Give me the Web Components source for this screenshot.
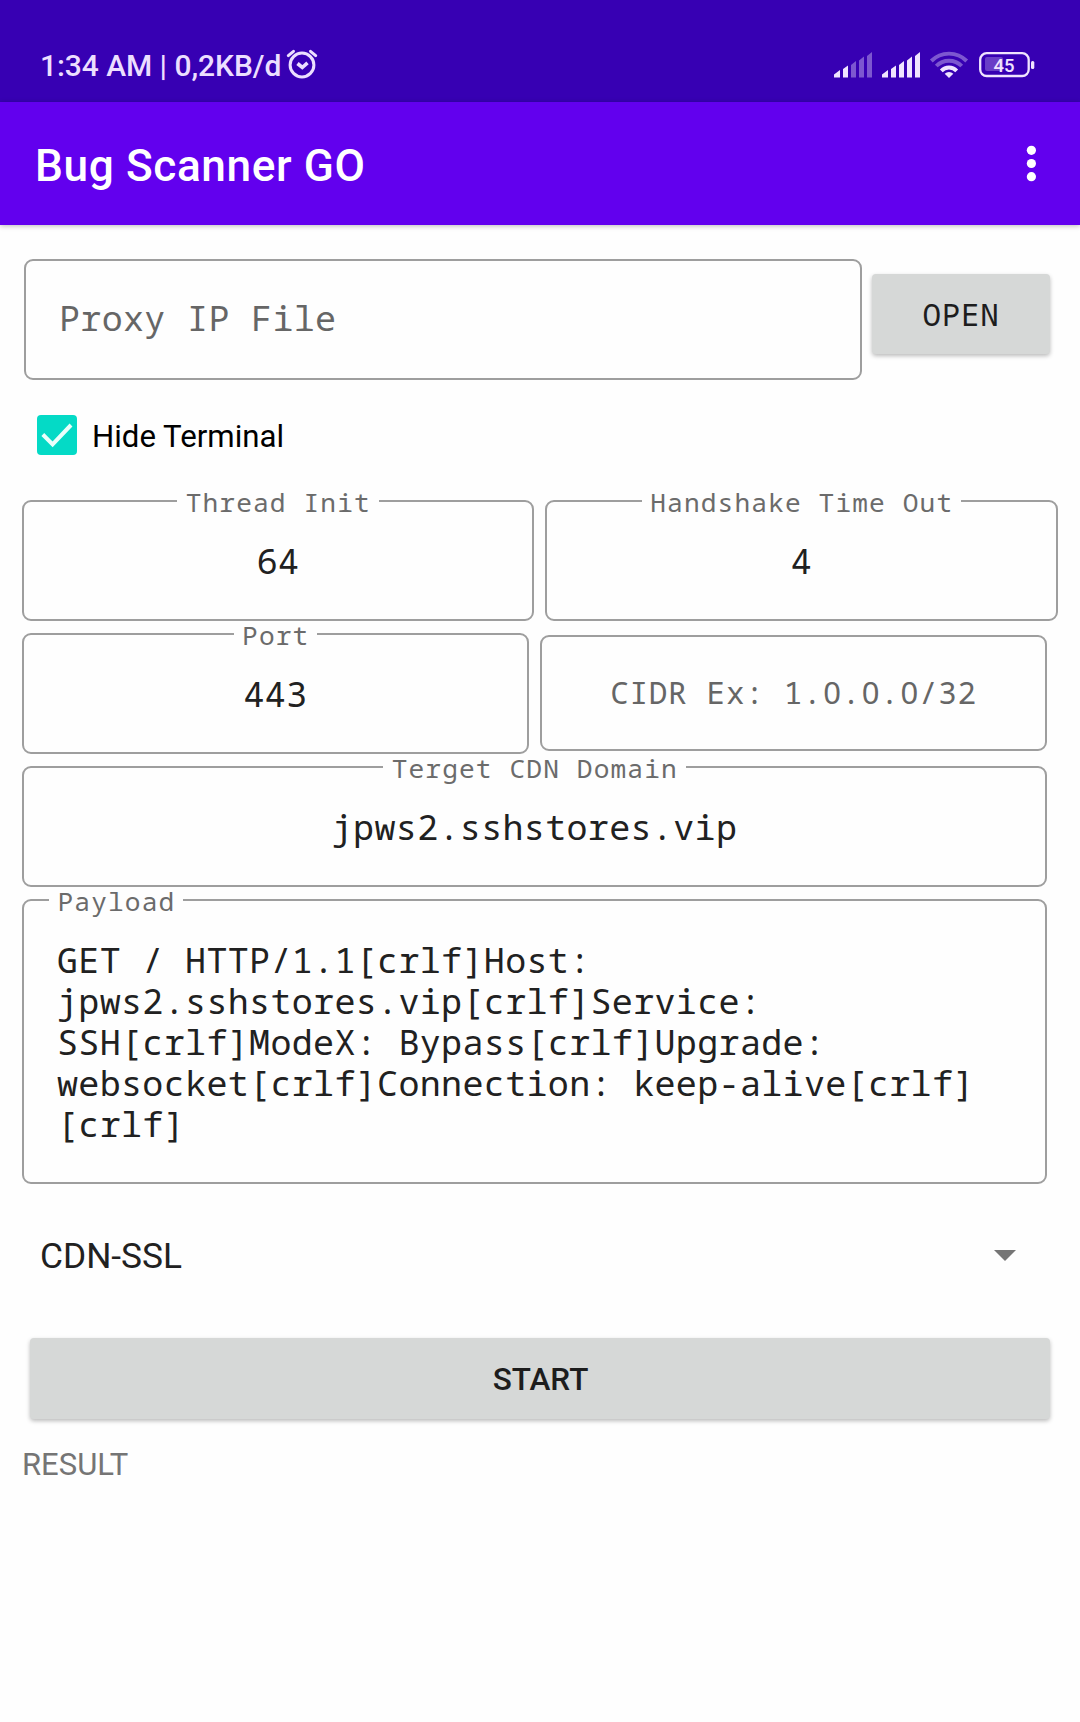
<!DOCTYPE html>
<html lang="en">
<head>
<meta charset="utf-8">
<title>Bug Scanner GO</title>
<style>
body{margin:0;background:#fefefe;font-family:Roboto,sans-serif;
--mono:"Noto Sans Mono","Droid Sans Mono","DejaVu Sans Mono",monospace}
</style>
</head>
<body>
<scanner-app></scanner-app>
<script>
const define=(name,html)=>{
  const t=document.createElement('template');t.innerHTML=html;
  customElements.define(name,class extends HTMLElement{
    constructor(){super();this.attachShadow({mode:'open'}).append(t.content.cloneNode(true));}
  });
};

define('status-bar',`<style>
:host{display:flex;height:102px;background:#3700b3;color:#ecdfff;box-sizing:border-box;padding:47px 0 0 40px}
.time{font:500 30px/36px Roboto,sans-serif;letter-spacing:-.06px;white-space:pre;width:240px;padding-top:1px}
svg{display:block}
.alarm{margin:1px 0 0 6px}
.right{margin:1px 0 0 auto}
</style>
<div class="time"><slot></slot></div>
<svg class="alarm" width="34" height="34" viewBox="286 48 34 34" fill="none" stroke="#ecdfff" stroke-width="3" stroke-linecap="round"><circle cx="302" cy="65" r="11.9"/><path d="M288.3 55.6l5.2-4.3M315.7 55.6l-5.2-4.3"/><path d="M297.500 63.500l4.800 4 5.200-4.600" stroke-linecap="butt" stroke-width="3.600"/></svg>
<svg class="right" width="250" height="34" viewBox="830 48 250 34" fill="#f0e4ff">
<path d="M834 77.500v-3l6-4.500v7.500zM843 77.500V69l5-3.500v12z"/>
<g opacity=".38"><path d="M851 77.500V65l5-4v16.500z"/><path d="M859 77.500V60.500l5-4v21z"/><path d="M867 77.500V56l5-4v25.500z"/></g>
<path d="M882 77.500v-3l6-4.500v7.500zM891 77.500V69l5-3.500v12zM899 77.500V65l5-4v16.500zM907 77.500V60.500l5-4v21zM915 77.500V56l5-4v25.500z"/>
<path d="M949 78l-4.300-4.300a6 6 0 0 1 8.600 0z"/>
<g fill="none" stroke="#f0e4ff" stroke-width="3.900"><path d="M941.300 70.800a10.800 10.800 0 0 1 15.400 0"/><g opacity=".38"><path d="M936.300 66a17.900 17.900 0 0 1 25.400 0"/><path d="M931.300 61a25 25 0 0 1 35.400 0"/></g></g>
<rect x="980.200" y="53.200" width="48.500" height="22.800" rx="6.500" fill="none" stroke="#f0e4ff" stroke-width="2.300"/>
<rect x="985" y="57" width="18" height="14" rx="2" opacity=".27"/>
<rect x="1031" y="61" width="3.300" height="8" rx="1.500"/>
<text x="1004" y="71.800" text-anchor="middle" font-family="Roboto" font-weight="500" font-size="18.500">45</text>
</svg>`);

define('app-bar',`<style>
:host{display:flex;justify-content:space-between;height:123px;background:#6200ee;color:#fff;box-sizing:border-box;box-shadow:0 1px 5px #0004}
.t{font:500 44.200px/52px Roboto,sans-serif;letter-spacing:.600px;margin:38px 0 0 35px}
svg{margin:40px 36px 0 0}
</style>
<div class="t"><slot></slot></div>
<svg width="26" height="44" fill="#fff"><circle cx="13.400" cy="8.300" r="4.600"/><circle cx="13.400" cy="21.500" r="4.600"/><circle cx="13.400" cy="34.700" r="4.600"/></svg>`);

define('plain-field',`<style>
:host{display:flex;align-items:center;box-sizing:border-box;border:2px solid #9e9e9e;border-radius:9px;font-family:var(--mono);color:#666;white-space:pre}
</style><slot></slot>`);

/* Outlined field whose floating label sits in a notch of the border. */
define('outlined-field',`<style>
:host{display:block}
fieldset{margin:0;border:2px solid #9e9e9e;border-radius:9px;padding:0;min-width:0;height:100%;box-sizing:border-box;text-align:center;font-family:var(--mono)}
legend{margin:0 auto;padding:2px 8px 0 8.500px;font-size:26.200px;line-height:22px;letter-spacing:1.120px;color:#6b6b6b}
.v{font-size:35px;line-height:41.100px;letter-spacing:.340px;color:#212121;margin-top:27px;white-space:pre-line}
:host([start]) legend{margin-left:25px}
:host([start]) .v{text-align:left;padding-left:33px}
</style><fieldset><legend><slot name="label"></slot></legend><div class="v"><slot></slot></div></fieldset>`);

define('raised-button',`<style>
:host{display:flex;align-items:center;justify-content:center;height:81px;box-sizing:border-box;background:#d6d8d7;color:#1d1d1d;border-radius:4px;box-shadow:0 2px 4px #0004}
</style><slot></slot>`);

define('check-option',`<style>
:host{display:flex;align-items:center;gap:15px;height:40px;font:400 31.200px/40px Roboto,sans-serif;color:#000}
svg{display:block}
span{padding-top:3px}
</style><svg width="40" height="40"><rect width="40" height="40" rx="4" fill="#04dac6"/><path d="M5.800 19.500l9.800 9.800L34 10" fill="none" stroke="#eafffb" stroke-width="4"/></svg><span><slot></slot></span>`);

define('drop-select',`<style>
:host{display:flex;align-items:center;justify-content:space-between;font:400 35.300px/44px Roboto,sans-serif;color:#212121;height:44px}
span{padding-bottom:2px}
svg{margin-bottom:3px}
</style><span><slot></slot></span><svg width="22" height="11"><path d="M0 0h22L11 11z" fill="#757575"/></svg>`);

define('scanner-app',`<style>
:host{display:flex;flex-direction:column;height:1722px;overflow:hidden}
main{display:flex;flex-direction:column;padding:34px 22px 0}
.row{display:flex}
.r1{height:121px;padding-left:2px}
.r1 plain-field{width:838px;padding:0 0 4px 33px;font-size:35px;letter-spacing:.340px}
.r1 raised-button{width:178px;height:80px;margin:15px 0 0 10px;padding-bottom:1px;font-family:var(--mono);font-size:30.900px;letter-spacing:.700px}
check-option{margin:35px 0 0 15px}
.r2{gap:11px;margin-top:34px;height:133px}
.r2 outlined-field{width:512px;height:132px}
.r2 outlined-field+outlined-field{width:513px}
.r3{gap:11px;height:133px}
.r3 outlined-field{width:507px;height:132px}
.r3 plain-field{width:507px;height:116px;margin-top:13px;padding-bottom:2px;justify-content:center;font-size:31px;letter-spacing:.700px}
/* Open zeros, padded out to one mono cell. */
.r3 i{display:inline-block;width:19.300px;text-align:center;letter-spacing:0;font-style:normal;font-family:"Noto Sans",sans-serif;line-height:1}
.wide{width:1025px;height:132px;margin-bottom:1px}
.pay{width:1025px;height:296px}
drop-select{margin:51px 42px 0 18px}
.start{margin:59px 8px 0;padding:2px 0 0 1px;font:500 31.500px/36px Roboto,sans-serif}
.res{font:400 31px/36px Roboto,sans-serif;color:#757575;margin-top:28px}
</style>
<status-bar>1:34 AM | 0,2KB/d</status-bar>
<app-bar>Bug Scanner GO</app-bar>
<main>
<div class="row r1"><plain-field>Proxy IP File</plain-field><raised-button>OPEN</raised-button></div>
<check-option>Hide Terminal</check-option>
<div class="row r2"><outlined-field><span slot="label">Thread Init</span>64</outlined-field><outlined-field><span slot="label">Handshake Time Out</span>4</outlined-field></div>
<div class="row r3"><outlined-field><span slot="label">Port</span>443</outlined-field><plain-field><span>CIDR Ex: 1.<i>0</i>.<i>0</i>.<i>0</i>/32</span></plain-field></div>
<outlined-field class="wide"><span slot="label">Terget CDN Domain</span>jpws2.sshstores.vip</outlined-field>
<outlined-field class="pay" start><span slot="label">Payload</span>GET / HTTP/1.1[crlf]Host:
jpws2.sshstores.vip[crlf]Service:
SSH[crlf]ModeX: Bypass[crlf]Upgrade:
websocket[crlf]Connection: keep-alive[crlf]
[crlf]</outlined-field>
<drop-select>CDN-SSL</drop-select>
<raised-button class="start">START</raised-button>
<div class="res">RESULT</div>
</main>`);
</script>
</body>
</html>
